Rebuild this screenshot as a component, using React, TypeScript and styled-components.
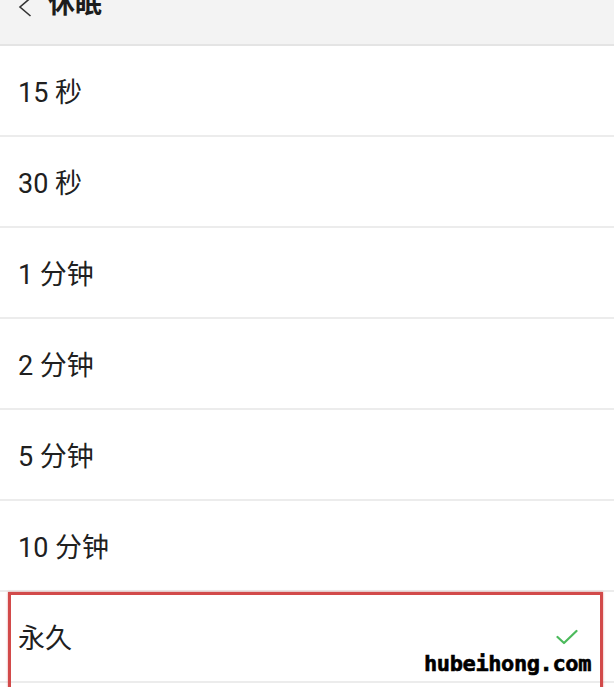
import styled, { createGlobalStyle } from "styled-components";

const GlobalStyle = createGlobalStyle`
  html, body {
    margin: 0;
    padding: 0;
    background: #ffffff;
    overflow: hidden;
  }
  body {
    font-family: Roboto, "Noto Sans CJK SC", "Noto Sans", sans-serif;
  }
`;

const StyledScreen = styled.div`
  width: 614px;
  height: 687px;
  overflow: hidden;
  background: #ffffff;
  display: flex;
  flex-direction: column;
`;

const StyledHeader = styled.header`
  height: 44px;
  flex-shrink: 0;
  background: #f3f3f3;
  border-bottom: 2px solid #e4e4e4;
  display: flex;
  align-items: flex-start;
  gap: 16px;
  padding-left: 18px;
  overflow: hidden;
`;

const StyledBack = styled.svg`
  margin-top: -3px;
  flex-shrink: 0;
`;

const StyledTitle = styled.h1`
  margin: -9px 0 0;
  font-size: 27px;
  line-height: 27px;
  font-weight: 700;
  color: #1c1c1c;
`;

const StyledList = styled.ul`
  list-style: none;
  margin: 0;
  padding: 0;
`;

const StyledRow = styled.li`
  position: relative;
  height: 89px;
  border-bottom: 2px solid #ececec;
  display: flex;
  align-items: center;
  justify-content: space-between;
  padding: 0 36px 0 18px;
  font-size: 27px;
  color: #202020;
`;

const StyledHighlight = styled.div`
  position: absolute;
  left: 8px;
  width: 589px;
  top: 0;
  height: 120px;
  border: 3px solid #d24a4a;
  box-shadow: 0 0 2px rgba(210, 74, 74, 0.6);
  pointer-events: none;
`;

const StyledWatermark = styled.span`
  position: absolute;
  right: 23px;
  top: 59px;
  font-family: "DejaVu Sans Mono", monospace;
  font-weight: bold;
  font-size: 22px;
  letter-spacing: -0.4px;
  color: #000000;
  -webkit-text-stroke: 0.6px #000000;
`;

const options = ["15 秒", "30 秒", "1 分钟", "2 分钟", "5 分钟", "10 分钟", "永久", ""];

const Check = () => (
  <svg width="22" height="16" viewBox="0 0 22 16">
    <polyline
      points="1.5,8 8,14 20.5,2"
      fill="none"
      stroke="#4cba5c"
      strokeWidth="2.2"
      strokeLinecap="round"
      strokeLinejoin="round"
    />
  </svg>
);

const App = () => {
  return (
    <StyledScreen>
      <GlobalStyle />
      <StyledHeader>
        <StyledBack width="14" height="20" viewBox="0 0 14 20">
          <polyline
            points="12.5,1 2,10 12.5,19"
            fill="none"
            stroke="#333333"
            strokeWidth="1.6"
          />
        </StyledBack>
        <StyledTitle>休眠</StyledTitle>
      </StyledHeader>
      <StyledList>
        {options.map((label, i) => (
          <StyledRow key={i}>
            <span>{label}</span>
            {label === "永久" && (
              <>
                <Check />
                <StyledHighlight />
                <StyledWatermark>hubeihong.com</StyledWatermark>
              </>
            )}
          </StyledRow>
        ))}
      </StyledList>
    </StyledScreen>
  );
};

export default App;
